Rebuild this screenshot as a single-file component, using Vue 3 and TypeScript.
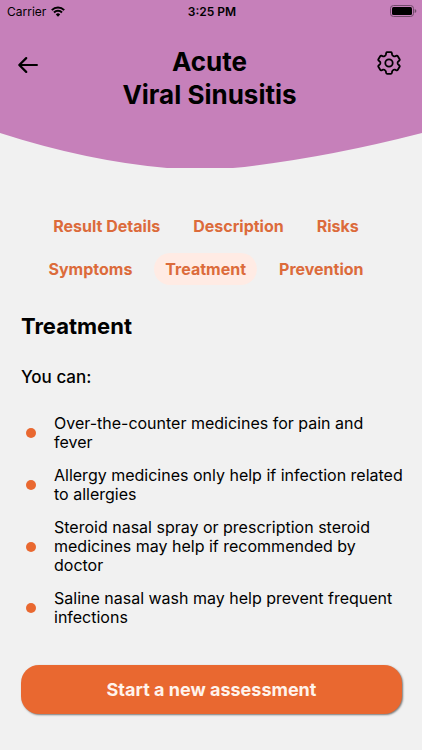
<script setup lang="ts">
import { ref } from 'vue'

const tabs: string[] = ['Result Details', 'Description', 'Risks', 'Symptoms', 'Treatment', 'Prevention']
const active = ref<string>('Treatment')

const advice: string[] = [
  'Over-the-counter medicines for pain and\nfever',
  'Allergy medicines only help if infection related\nto allergies',
  'Steroid nasal spray or prescription steroid\nmedicines may help if recommended by\ndoctor',
  'Saline nasal wash may help prevent frequent\ninfections',
]
</script>

<template>
  <div class="screen">
    <header class="hero">
      <div class="status">
        <div class="carrier">
          <span>Carrier</span>
          <svg class="wifi" viewBox="0 0 14 11" aria-hidden="true">
            <path d="M0.8 4.1 A8.8 8.8 0 0 1 13.2 4.1" />
            <path d="M3 6.5 A5.6 5.6 0 0 1 11 6.5" />
            <path class="dot" d="M4.8 8.4 A3.2 3.2 0 0 1 9.2 8.4 L7 10.7 Z" />
          </svg>
        </div>
        <span class="clock">3:25 PM</span>
        <svg class="battery" viewBox="0 0 27 12" aria-hidden="true">
          <rect class="case" x="0.5" y="0.5" width="23" height="11" rx="3" />
          <rect x="2" y="2" width="20" height="8" rx="1.5" />
          <path class="tip" d="M24.7 4 Q26.4 4.6 26.4 6 Q26.4 7.4 24.7 8 Z" />
        </svg>
      </div>
      <div class="bar">
        <button class="icon-button" type="button" aria-label="Back">
          <svg class="back" viewBox="0 0 20 16" aria-hidden="true">
            <path d="M18.9 8 H1.3 M8.2 1.1 L1.3 8 L8.2 14.9" />
          </svg>
        </button>
        <h1 class="title">Acute<br />Viral Sinusitis</h1>
        <button class="icon-button end" type="button" aria-label="Settings">
          <svg class="gear" viewBox="0 0 24 24" aria-hidden="true">
            <path d="M10.2 1.2 H13.8 Q14.6 1.2 14.8 2 L15.2 3.8 Q15.4 4.5 16 4.8 L16.6 5.2 Q17.2 5.5 17.9 5.3 L19.6 4.7 Q20.4 4.5 20.8 5.2 L22.6 8.3 Q23 9 22.4 9.5 L21.1 10.7 Q20.6 11.2 20.6 12 Q20.6 12.8 21.1 13.3 L22.4 14.5 Q23 15 22.6 15.7 L20.8 18.8 Q20.4 19.5 19.6 19.3 L17.9 18.7 Q17.2 18.5 16.6 18.8 L16 19.2 Q15.4 19.5 15.2 20.2 L14.8 22 Q14.6 22.8 13.8 22.8 H10.2 Q9.4 22.8 9.2 22 L8.8 20.2 Q8.6 19.5 8 19.2 L7.4 18.8 Q6.8 18.5 6.1 18.7 L4.4 19.3 Q3.6 19.5 3.2 18.8 L1.4 15.7 Q1 15 1.6 14.5 L2.9 13.3 Q3.4 12.8 3.4 12 Q3.4 11.2 2.9 10.7 L1.6 9.5 Q1 9 1.4 8.3 L3.2 5.2 Q3.6 4.5 4.4 4.7 L6.1 5.3 Q6.8 5.5 7.4 5.2 L8 4.8 Q8.6 4.5 8.8 3.8 L9.2 2 Q9.4 1.2 10.2 1.2 Z" />
            <circle cx="12" cy="12" r="3.7" />
          </svg>
        </button>
      </div>
    </header>
    <svg class="curve" viewBox="0 0 422 35" preserveAspectRatio="none" aria-hidden="true">
      <path d="M0 0 Q87 28 167 35 H233 Q321 26 422 0 Z" />
    </svg>

    <main class="content">
      <nav class="tabs" aria-label="Sections">
        <button
          v-for="tab in tabs"
          :key="tab"
          type="button"
          class="tab"
          :class="{ active: tab === active }"
          @click="active = tab"
        >
          {{ tab }}
        </button>
      </nav>

      <h2 class="heading">{{ active }}</h2>
      <h3 class="lead">You can:</h3>
      <ul class="advice">
        <li v-for="item in advice" :key="item">{{ item }}</li>
      </ul>

      <button class="primary" type="button">Start a new assessment</button>
    </main>
  </div>
</template>

<style>
body {
  background: #f1f1f1;
}
</style>

<style scoped>
.screen {
  color: #000;
  font-family: Inter, "Liberation Sans", sans-serif;
}
button {
  font-family: inherit;
  border: 0;
  cursor: pointer;
}
.hero {
  background: #c680ba;
  height: 133px;
}
.status {
  display: grid;
  grid-template-columns: 1fr auto 1fr;
  align-items: center;
  height: 22px;
  padding: 0 5px 0 7px;
  font-size: 12px;
}
.carrier {
  display: flex;
  align-items: center;
  gap: 5px;
}
.wifi {
  width: 14px;
  height: 11px;
  fill: none;
  stroke: #000;
  stroke-width: 2;
}
.wifi .dot {
  fill: #000;
  stroke: none;
}
.clock {
  font-weight: 600;
}
.battery {
  justify-self: end;
  width: 27px;
  height: 12px;
}
.battery .case {
  fill: none;
  stroke: #704b6a;
}
.battery .tip {
  fill: #704b6a;
}
.bar {
  display: grid;
  grid-template-columns: 40px 1fr 40px;
  padding: 23px 21px 0 18px;
}
.icon-button {
  display: flex;
  align-items: center;
  height: 40px;
  padding: 0;
  background: none;
}
.end {
  justify-content: flex-end;
  height: 36px;
}
.back {
  width: 20px;
  height: 16px;
  fill: none;
  stroke: #000;
  stroke-width: 2.2;
  stroke-linecap: round;
  stroke-linejoin: round;
}
.gear {
  width: 24px;
  height: 24px;
  fill: none;
  stroke: #000;
  stroke-width: 1.8;
  stroke-linejoin: round;
}
.title {
  margin: 0;
  font-size: 26px;
  line-height: 33px;
  font-weight: 700;
  text-align: center;
}
.curve {
  display: block;
  width: 100%;
  height: 35px;
  fill: #c680ba;
}
.content {
  padding: 42px 20px 36px 21px;
}
.tabs {
  display: flex;
  flex-wrap: wrap;
  justify-content: center;
  gap: 11px;
  padding: 0 20px 0 9px;
}
.tab {
  height: 32px;
  padding: 0 11px;
  border-radius: 16px;
  background: none;
  color: #dc6b3b;
  font-size: 16px;
  font-weight: 700;
}
.tab.active {
  background: #ffebe4;
}
.heading {
  margin: 28px 0 0;
  font-size: 22px;
  line-height: 26px;
  font-weight: 700;
}
.lead {
  margin: 26px 0 0;
  font-size: 17px;
  line-height: 24px;
  font-weight: 500;
}
.advice {
  display: grid;
  gap: 14px;
  margin: 25px -12px 0 0;
  padding: 0;
  list-style: none;
}
.advice li {
  display: flex;
  align-items: center;
  gap: 18px;
  padding-left: 5px;
  font-size: 16px;
  line-height: 19px;
  white-space: pre-line;
}
.advice li::before {
  content: "";
  flex: none;
  width: 10px;
  height: 10px;
  border-radius: 50%;
  background: #e96830;
}
.primary {
  display: block;
  width: 100%;
  height: 49px;
  margin-top: 38px;
  border-radius: 18px;
  background: #e96830;
  box-shadow: 1px 1px 2px rgba(0, 0, 0, 0.5);
  color: #fff3ec;
  font-size: 18px;
  font-weight: 700;
}
</style>
